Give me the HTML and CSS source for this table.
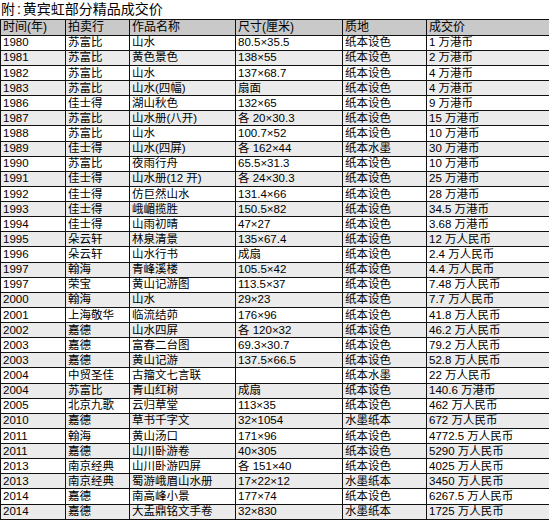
FILE: index.html
```html
<!DOCTYPE html>
<html lang="zh">
<head>
<meta charset="utf-8">
<title>黄宾虹部分精品成交价</title>
<link rel="stylesheet" href="styles.css">
</head>
<body>
<div class="page">
<h1 class="title">附 : 黄宾虹部分精品成交价</h1>
<table class="prices">
<colgroup>
<col class="c1"><col class="c2"><col class="c3"><col class="c4"><col class="c5"><col class="c6">
</colgroup>
<thead>
<tr><th>时间(年)</th><th>拍卖行</th><th>作品名称</th><th>尺寸(厘米)</th><th>质地</th><th>成交价</th></tr>
</thead>
<tbody>
<tr><td>1980</td><td>苏富比</td><td>山水</td><td>80.5×35.5</td><td>纸本设色</td><td>1 万港币</td></tr>
<tr><td>1981</td><td>苏富比</td><td>黄色景色</td><td>138×55</td><td>纸本设色</td><td>2 万港币</td></tr>
<tr><td>1982</td><td>苏富比</td><td>山水</td><td>137×68.7</td><td>纸本设色</td><td>4 万港币</td></tr>
<tr><td>1983</td><td>苏富比</td><td>山水(四幅)</td><td>扇面</td><td>纸本设色</td><td>4 万港币</td></tr>
<tr><td>1986</td><td>佳士得</td><td>湖山秋色</td><td>132×65</td><td>纸本设色</td><td>9 万港币</td></tr>
<tr><td>1987</td><td>苏富比</td><td>山水册(八开)</td><td>各 20×30.3</td><td>纸本设色</td><td>15 万港币</td></tr>
<tr><td>1988</td><td>苏富比</td><td>山水</td><td>100.7×52</td><td>纸本设色</td><td>10 万港币</td></tr>
<tr><td>1989</td><td>佳士得</td><td>山水(四屏)</td><td>各 162×44</td><td>纸本水墨</td><td>30 万港币</td></tr>
<tr><td>1990</td><td>苏富比</td><td>夜雨行舟</td><td>65.5×31.3</td><td>纸本设色</td><td>10 万港币</td></tr>
<tr><td>1991</td><td>佳士得</td><td>山水册(12 开)</td><td>各 24×30.3</td><td>纸本设色</td><td>25 万港币</td></tr>
<tr><td>1992</td><td>佳士得</td><td>仿巨然山水</td><td>131.4×66</td><td>纸本设色</td><td>28 万港币</td></tr>
<tr><td>1993</td><td>佳士得</td><td>峨嵋揽胜</td><td>150.5×82</td><td>纸本设色</td><td>34.5 万港币</td></tr>
<tr><td>1994</td><td>佳士得</td><td>山雨初晴</td><td>47×27</td><td>纸本设色</td><td>3.68 万港币</td></tr>
<tr><td>1995</td><td>朵云轩</td><td>林泉清景</td><td>135×67.4</td><td>纸本设色</td><td>12 万人民币</td></tr>
<tr><td>1996</td><td>朵云轩</td><td>山水行书</td><td>成扇</td><td>纸本设色</td><td>2.4 万人民币</td></tr>
<tr><td>1997</td><td>翰海</td><td>青峰溪楼</td><td>105.5×42</td><td>纸本设色</td><td>4.4 万人民币</td></tr>
<tr><td>1997</td><td>荣宝</td><td>黄山记游图</td><td>113.5×37</td><td>纸本设色</td><td>7.48 万人民币</td></tr>
<tr><td>2000</td><td>翰海</td><td>山水</td><td>29×23</td><td>纸本设色</td><td>7.7 万人民币</td></tr>
<tr><td>2001</td><td>上海敬华</td><td>临流结茆</td><td>176×96</td><td>纸本设色</td><td>41.8 万人民币</td></tr>
<tr><td>2002</td><td>嘉德</td><td>山水四屏</td><td>各 120×32</td><td>纸本设色</td><td>46.2 万人民币</td></tr>
<tr><td>2003</td><td>嘉德</td><td>富春二台图</td><td>69.3×30.7</td><td>纸本设色</td><td>79.2 万人民币</td></tr>
<tr><td>2003</td><td>嘉德</td><td>黄山记游</td><td>137.5×66.5</td><td>纸本设色</td><td>52.8 万人民币</td></tr>
<tr><td>2004</td><td>中贸圣佳</td><td>古籀文七言联</td><td></td><td>纸本水墨</td><td>22 万人民币</td></tr>
<tr><td>2004</td><td>苏富比</td><td>青山红树</td><td>成扇</td><td>纸本设色</td><td>140.6 万港币</td></tr>
<tr><td>2005</td><td>北京九歌</td><td>云归草堂</td><td>113×35</td><td>纸本设色</td><td>462 万人民币</td></tr>
<tr><td>2010</td><td>嘉德</td><td>草书千字文</td><td>32×1054</td><td>水墨纸本</td><td>672 万人民币</td></tr>
<tr><td>2011</td><td>翰海</td><td>黄山汤口</td><td>171×96</td><td>纸本设色</td><td>4772.5 万人民币</td></tr>
<tr><td>2011</td><td>嘉德</td><td>山川卧游卷</td><td>40×305</td><td>纸本设色</td><td>5290 万人民币</td></tr>
<tr><td>2013</td><td>南京经典</td><td>山川卧游四屏</td><td>各 151×40</td><td>纸本设色</td><td>4025 万人民币</td></tr>
<tr><td>2013</td><td>南京经典</td><td>蜀游峨眉山水册</td><td>17×22×12</td><td>水墨纸本</td><td>3450 万人民币</td></tr>
<tr><td>2014</td><td>嘉德</td><td>南高峰小景</td><td>177×74</td><td>纸本设色</td><td>6267.5 万人民币</td></tr>
<tr><td>2014</td><td>嘉德</td><td>大盂鼎铭文手卷</td><td>32×830</td><td>水墨纸本</td><td>1725 万人民币</td></tr>
</tbody>
</table>
</div>
</body>
</html>
```

FILE: styles.css
```css
html, body {
  margin: 0;
  padding: 0;
  background: #ffffff;
}

.page {
  width: 549px;
  height: 520px;
  overflow: hidden;
  font-family: "Liberation Sans", "Noto Sans CJK SC", sans-serif;
  color: #000000;
}

.title {
  margin: 0;
  padding-left: 1px;
  height: 19px;
  line-height: 19px;
  font-size: 14px;
  font-weight: normal;
  white-space: nowrap;
  word-spacing: -2px;
}

.prices {
  border-collapse: collapse;
  table-layout: fixed;
  width: 560px;
  font-size: 11.5px;
}

.c1 { width: 65px; }
.c2 { width: 64px; }
.c3 { width: 106px; }
.c4 { width: 107px; }
.c5 { width: 84px; }
.c6 { width: 134px; }

.prices th,
.prices td {
  border: 1px solid #111111;
  padding: 0 0 0 2px;
  text-align: left;
  white-space: nowrap;
  overflow: hidden;
  line-height: 13px;
  font-weight: normal;
}

.prices thead tr {
  height: 15.7px;
}

.prices th {
  background: #c9c9c9;
  font-size: 12px;
}

.prices tbody tr {
  height: 15.13px;
}

.prices tbody tr:nth-child(even) td {
  background: #ebebeb;
}
```
